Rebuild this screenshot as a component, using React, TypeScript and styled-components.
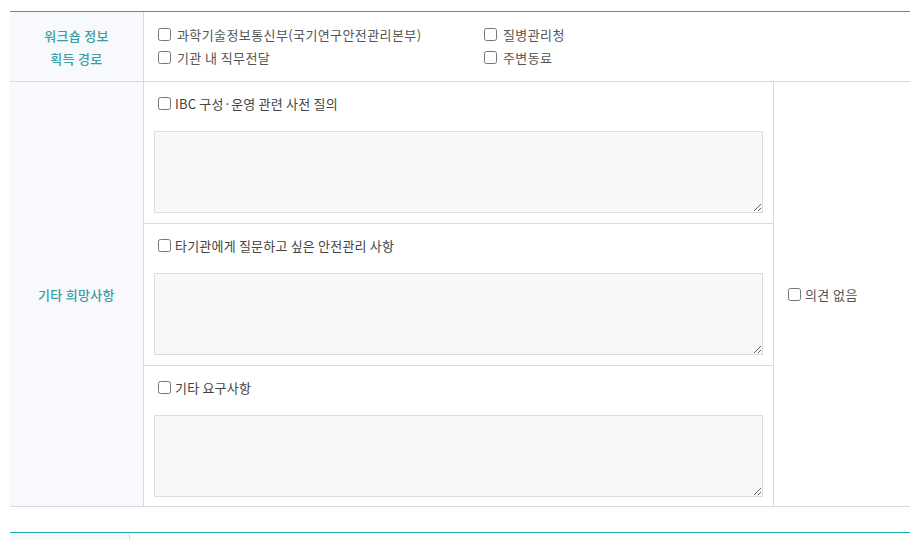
import styled, { createGlobalStyle } from "styled-components";

const GlobalStyle = createGlobalStyle`
  body {
    margin: 0;
    background: #ffffff;
    font-family: "Noto Sans CJK KR", "Noto Sans", sans-serif;
  }
`;

const Page = styled.div`
  padding: 11px 13px 0 10px;
`;

const Table = styled.div`
  width: 900px;
  border-top: 1px solid #26a9a8;
`;

const Row = styled.div`
  display: grid;
  grid-template-columns: 134px 1fr;
  border-bottom: 1px solid #d5dae3;
`;

const HeadCell = styled.div`
  display: flex;
  align-items: center;
  justify-content: center;
  text-align: center;
  background: #f7f9fd;
  border-right: 1px solid #d5dae3;
  color: #3a9ea2;
  font-size: 13px;
  font-weight: 500;
  letter-spacing: 0.3px;
  line-height: 23px;
`;

const BodyCell = styled.div<{ $pad?: string }>`
  padding: ${(p) => p.$pad ?? "10px"};
`;

const CheckGrid = styled.div`
  display: grid;
  grid-template-columns: 326px 1fr;
`;

const Check = styled.label<{ $gap?: number }>`
  display: flex;
  align-items: center;
  height: 23px;
  font-size: 13px;
  letter-spacing: 0.4px;
  color: #555555;
  white-space: nowrap;

  input {
    width: 13px;
    height: 13px;
    margin: 0 ${(p) => p.$gap ?? 4}px 0 4px;
  }
`;

const Split = styled.div`
  display: grid;
  grid-template-columns: 1fr 136px;
`;

const Questions = styled.div`
  border-right: 1px solid #d5dae3;
`;

const Question = styled.div`
  padding: 10px;
  height: 121px;

  & + & {
    border-top: 1px solid #d5dae3;
  }

  &:last-child {
    height: 120px;
  }
`;

const QuestionLabel = styled(Check)`
  height: 23px;
  margin-bottom: 16px;
  letter-spacing: 0.2px;
  color: #444444;
`;

const Memo = styled.textarea`
  display: block;
  box-sizing: border-box;
  width: 100%;
  height: 82px;
  margin: 0;
  background: #f8f8f8;
  border: 1px solid #dcdcdc;
  font-family: inherit;
`;

const NoOpinion = styled.div`
  display: flex;
  align-items: center;
  padding: 0 10px;
`;

const NextTable = styled.div`
  width: 900px;
  margin-top: 25px;
  border-top: 1px solid #1aabab;
  display: grid;
  grid-template-columns: 120px 1fr;
  height: 20px;
`;

const NextHead = styled.div`
  background: #f7f9fd;
  border-right: 1px solid #d5dae3;
`;

const questions = [
  "IBC 구성·운영 관련 사전 질의",
  "타기관에게 질문하고 싶은 안전관리 사항",
  "기타 요구사항",
];

export default function App() {
  return (
    <Page>
      <GlobalStyle />
      <Table>
        <Row>
          <HeadCell>
            워크숍 정보
            <br />
            획득 경로
          </HeadCell>
          <BodyCell $pad="11px 10px 12px">
            <CheckGrid>
              <Check $gap={6}>
                <input type="checkbox" />
                과학기술정보통신부(국기연구안전관리본부)
              </Check>
              <Check $gap={6}>
                <input type="checkbox" />
                질병관리청
              </Check>
              <Check $gap={6}>
                <input type="checkbox" />
                기관 내 직무전달
              </Check>
              <Check $gap={6}>
                <input type="checkbox" />
                주변동료
              </Check>
            </CheckGrid>
          </BodyCell>
        </Row>
        <Row>
          <HeadCell>기타 희망사항</HeadCell>
          <Split>
            <Questions>
              {questions.map((q) => (
                <Question key={q}>
                  <QuestionLabel>
                    <input type="checkbox" />
                    {q}
                  </QuestionLabel>
                  <Memo />
                </Question>
              ))}
            </Questions>
            <NoOpinion>
              <Check>
                <input type="checkbox" />
                의견 없음
              </Check>
            </NoOpinion>
          </Split>
        </Row>
      </Table>
      <NextTable>
        <NextHead />
        <div />
      </NextTable>
    </Page>
  );
}
